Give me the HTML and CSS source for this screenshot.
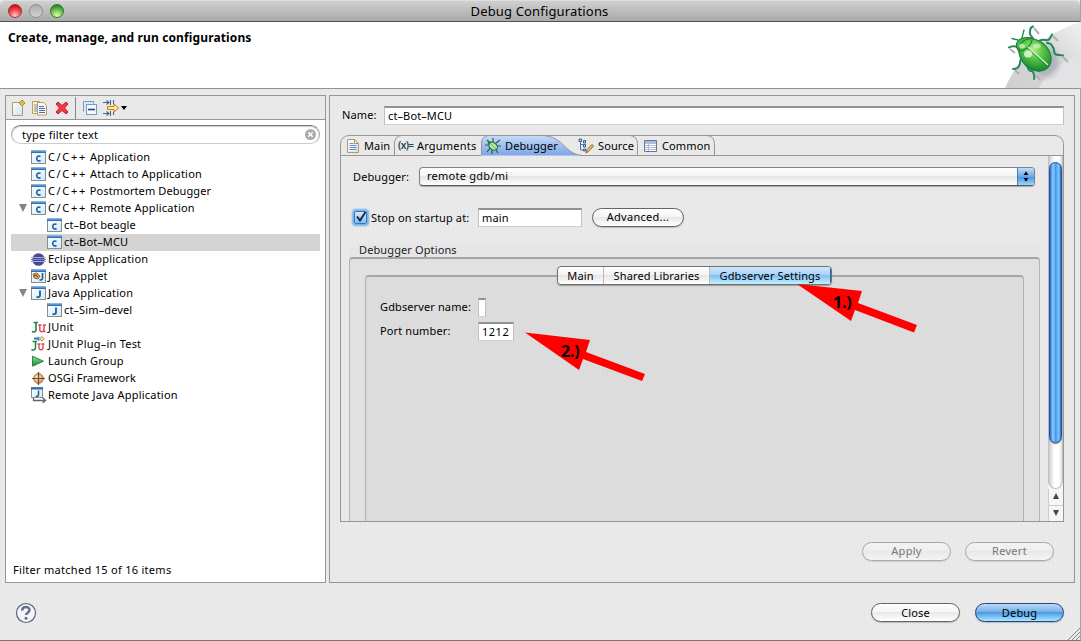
FILE: index.html
```html
<!DOCTYPE html>
<html lang="en">
<head>
<meta charset="utf-8">
<title>Debug Configurations</title>
<link rel="stylesheet" href="styles.css">
</head>
<body>
<svg class="defs" width="0" height="0">
  <defs>
    <linearGradient id="winbar" x1="0" y1="0" x2="0" y2="1"><stop offset="0" stop-color="#9ec4ec"/><stop offset="1" stop-color="#1f5fae"/></linearGradient>
    <linearGradient id="winbody" x1="0" y1="0" x2="1" y2="1"><stop offset="0" stop-color="#fff"/><stop offset="1" stop-color="#cdebfb"/></linearGradient>
    <linearGradient id="page" x1="0" y1="0" x2="1" y2="1"><stop offset="0" stop-color="#fff"/><stop offset="1" stop-color="#cfe0f3"/></linearGradient>
    <linearGradient id="play" x1="0" y1="0" x2="0" y2="1"><stop offset="0" stop-color="#8fdc9b"/><stop offset="1" stop-color="#168a3c"/></linearGradient>
    <linearGradient id="tabblue" x1="0" y1="0" x2="0" y2="1"><stop offset="0" stop-color="#c6dcf8"/><stop offset="1" stop-color="#7ba4e8"/></linearGradient>
    <radialGradient id="shell" cx=".35" cy=".4" r=".75"><stop offset="0" stop-color="#b4ee8c"/><stop offset=".4" stop-color="#5cc447"/><stop offset="1" stop-color="#087a2c"/></radialGradient>
    <radialGradient id="osgi" cx=".4" cy=".4" r=".6"><stop offset="0" stop-color="#fff0d0"/><stop offset="1" stop-color="#d29a60"/></radialGradient>
    <symbol id="i-win" viewBox="0 0 16 16"><rect x=".5" y="1.500" width="14" height="13" fill="url(#winbody)" stroke="#8a8f83"/><rect x="0" y="1" width="15" height="3" fill="url(#winbar)"/></symbol>
    <symbol id="i-c" viewBox="0 0 16 16"><use href="#i-win"/><path d="M9.500 7.500C7.900 6.500 5.700 7.200 5.700 9.500s2.200 3 3.800 2" fill="none" stroke="#1d5ba0" stroke-width="1.600"/></symbol>
    <symbol id="i-j" viewBox="0 0 16 16"><use href="#i-win"/><path d="M9 5.500v4.700c0 2-1.700 2.200-3.500 1.700" fill="none" stroke="#1d5ba0" stroke-width="1.800"/></symbol>
    <symbol id="i-applet" viewBox="0 0 16 16"><use href="#i-win"/><path d="M2 6l4-1 3 3-2 3-4-1z" fill="#d7a354" stroke="#875a25" stroke-width=".8"/><path d="M3 8l2-1 2 2" stroke="#70431a" fill="none"/><path d="M11.500 5v5c0 2-1.300 2.200-3 1.800" fill="none" stroke="#1d5ba0" stroke-width="1.600"/></symbol>
    <symbol id="i-eclipse" viewBox="0 0 16 16"><circle cx="7.500" cy="8.500" r="6.300" fill="#494a94"/><path d="M0 6.500h15M0 10.500h15" stroke="#aaa9dd"/><path d="M0 8.500h15" stroke="#8281c0"/></symbol>
    <symbol id="i-ju" viewBox="0 0 16 16"><path d="M2.500 3.500h4.500M5 3.500v7c0 2.500-2.100 3-4 2" fill="none" stroke="#23894a" stroke-width="1.700"/><path d="M7.200 6h3.300M11.800 6H15M8.800 6v4.500c0 3 4.200 3 4.200 0V6M13 12.600h1.500" fill="none" stroke="#dc4d54" stroke-width="1.500"/></symbol>
    <symbol id="i-jup" viewBox="0 0 16 16"><path d="M1.500 5.500h4.500M4.500 5.500v6c0 2.500-2.100 3-4 2" fill="none" stroke="#23894a" stroke-width="1.600"/><path d="M6.500 8h3M10.500 8H13.500M8 8v3.500c0 3 4 3 4 0V8" fill="none" stroke="#dc4d54" stroke-width="1.400"/><path d="M3 2.500h5" stroke="#3372b5" stroke-width="2"/><path d="M6.500.8h2v4h-2z" fill="#4c8ac8"/><path d="M11 .5l2.300 2.300L11 5.100 8.700 2.800z" fill="#d7e9fa" stroke="#bf8527"/></symbol>
    <symbol id="i-play" viewBox="0 0 16 16"><path d="M1.500 3.200L12.500 8.200l-11 5z" fill="url(#play)" stroke="#218646"/></symbol>
    <symbol id="i-osgi" viewBox="0 0 16 16"><circle cx="7.500" cy="8.500" r="4.800" fill="url(#osgi)" stroke="#a06b42"/><path d="M7.500 2v13M1 8.500h13" stroke="#794523" stroke-width="1.200"/></symbol>
    <symbol id="i-remote" viewBox="0 0 16 16"><rect x=".5" y=".5" width="11" height="10" fill="url(#winbody)" stroke="#8a8f83"/><path d="M0 .5h12v2H0z" fill="#276ab7"/><path d="M7.500 3.500v4.200c0 1.600-1.400 1.900-2.700 1.400" fill="none" stroke="#1d5ba0" stroke-width="1.500"/><path d="M2.500 11v2.500H14M11.500 10.500l3 3-3 2.500" fill="none" stroke="#65626b" stroke-width="1.300"/></symbol>
    <symbol id="i-bug" viewBox="0 0 16 16"><path d="M5 5L2 2M8 4V0M4 7H0M5 10l-3 4M7 12v4M11 12l2 3M12 8h4M11 5l4-3" stroke="#265e48" stroke-width="1.200"/><circle cx="4.800" cy="5.200" r="2" fill="#377a4c"/><ellipse cx="8.200" cy="8.300" rx="4.600" ry="3.500" transform="rotate(38 8.200 8.300)" fill="#b7eca0" stroke="#24724d" stroke-width="1.200"/><path d="M6 6l5 5" stroke="#5dab64"/></symbol>
  </defs>
</svg>

<div class="window">
  <header class="titlebar">
    <div class="lights"><i class="light red"></i><i class="light gray"></i><i class="light green"></i></div>
    <span class="title">Debug Configurations</span>
  </header>

  <section class="banner">
    <h1>Create, manage, and run configurations</h1>
    <svg class="bigbug" width="76" height="66" viewBox="0 0 76 66">
      <defs>
        <linearGradient id="sweep" x1="0" y1="1" x2="1" y2="0"><stop offset="0" stop-color="#d0d0d1"/><stop offset=".5" stop-color="#d4d4d6"/><stop offset="1" stop-color="#f0f0f0"/></linearGradient>
        <radialGradient id="shade"><stop offset="0" stop-color="#9fa0ac" stop-opacity=".9"/><stop offset=".6" stop-color="#a8a9b4" stop-opacity=".7"/><stop offset="1" stop-color="#b8b8c0" stop-opacity="0"/></radialGradient>
      </defs>
      <path d="M0 66C12 38 36 12 76 0v66z" fill="url(#sweep)"/>
      <path d="M34 66C43 48 59 38 76 33v33z" fill="#e3e3e5"/>
      <ellipse cx="40" cy="40" rx="18" ry="20" fill="url(#shade)"/>
      <g fill="none" stroke="#b0b0b6" stroke-width="2"><path d="M29 6l5 6M48 14l5 5M58 35l5 5M5 27l5 4M10 48l4 4M31 53l4 5"/></g>
      <g fill="none" stroke="#238857" stroke-width="2" stroke-linecap="round" stroke-linejoin="round">
        <path d="M29 18c-1-3-5-4-4-8 0-3 1-5 3-5.500M35 18.500c4-2 7 1 9-1s2-3 3-5M42 21c5 0 5 3 6 4.500 2 2 0 6 3 7s4 0 7 1M15 30c-2-1-2-5-4-5.500s-4-1-7 1M17 36c-3 2-1 5-3 8-1 2-3 3-6 3M20 41c3 1 2 5 4 7s3 0 4 2 2 4 1 7"/>
        <path d="M13 18l-6-1.500M17 16l2-8" stroke-width="1.300"/>
      </g>
      <path d="M12 26c-3-8 6-12 15-10l3 5-14 11z" fill="#45b544" stroke="#137434"/>
      <ellipse cx="30" cy="33" rx="18" ry="14" transform="rotate(45 30 33)" fill="url(#shell)" stroke="#148038"/>
      <path d="M14 29c6 0 12-5 13-11" fill="none" stroke="#178139" stroke-width="1.200"/>
      <path d="M23 25l20 18" fill="none" stroke="#c6f3af" stroke-width="1.500"/>
      <path d="M22 26l20 18" fill="none" stroke="#16772e" stroke-width=".7"/>
      <ellipse cx="23" cy="32" rx="4" ry="3.500" fill="#effce6" opacity=".75"/><ellipse cx="17" cy="24" rx="3" ry="2.500" fill="#d8f8c4" opacity=".7"/><ellipse cx="32" cy="24" rx="4" ry="2.500" fill="#e0f9d4" opacity=".6"/>
    </svg>
  </section>

  <main class="panes">
    <section class="left">
      <div class="toolbar">
        <svg width="16" height="16" viewBox="0 0 16 16"><path d="M2.500 2.500h7l3 4v9h-10z" fill="url(#page)" stroke="#ad9c6c"/><path d="M12 0l3 3-3 3-3-3z" fill="#fff3b0" stroke="#ba8614"/><path d="M12 1v4M10 3h4" stroke="#c8971d"/></svg>
        <svg class="g1" width="16" height="16" viewBox="0 0 16 16"><path d="M.5 1.500h7l2 2v10h-9z" fill="#f8f2dc" stroke="#c29b52"/><path d="M2 5h3M2 7h3M2 9h3M2 11h3" stroke="#7293be"/><path d="M5.500 2.500h6l3 3v9.500h-9z" fill="#f4f8fe" stroke="#c29b52"/><path d="M7 6.500h5M7 8.500h6M7 10.500h6M7 12.500h6" stroke="#4a72a8"/></svg>
        <svg class="g2" width="14" height="14" viewBox="0 0 14 14"><path d="M3 1l4 3.500L11 1l2 2-3.500 4 3.500 4-2 2-4-3.500L3 13l-2-2 3.500-4L1 3z" fill="#ed3c45" stroke="#c61924"/></svg>
        <i class="sep"></i>
        <svg class="g3" width="14" height="14" viewBox="0 0 14 14"><path d="M.5 10.500V.5h10v2" fill="#dbe7f6" stroke="#7b9abc"/><rect x="3.500" y="3.500" width="10" height="10" fill="#f3f8fe" stroke="#7b9abc"/><path d="M5 8.500h7" stroke="#144b91" stroke-width="1.600"/></svg>
        <svg class="g4" width="17" height="16" viewBox="0 0 17 16"><path d="M0 2.500h6M3.500.5l2.500 2-2.500 2M7.500 0v5M10.500 0v4M0 13.500h6M3.500 11.500l2.500 2-2.500 2M7.500 11v5M10.500 12v3" fill="none" stroke="#496785" stroke-width="1.100"/><path d="M4.500 6.500H11v-2.500l4.500 4-4.500 4V9.500H4.500z" fill="#ffe9a8" stroke="#be8015"/></svg>
        <i class="drop"></i>
      </div>
      <div class="searchrow">
        <div class="search"><span>type filter text</span><svg width="11" height="11" viewBox="0 0 11 11"><circle cx="5.500" cy="5.500" r="5.500" fill="#ababab"/><path d="M3.300 3.300l4.400 4.400M7.700 3.300L3.300 7.700" stroke="#fff" stroke-width="1.500"/></svg></div>
      </div>
      <ul class="tree">
        <li><svg><use href="#i-c"/></svg><span><span class="wide">C/C++</span> Application</span></li>
        <li><svg><use href="#i-c"/></svg><span><span class="wide">C/C++</span> Attach to Application</span></li>
        <li class="tight"><svg><use href="#i-c"/></svg><span><span class="wide">C/C++</span> Postmortem Debugger</span></li>
        <li class="open"><svg><use href="#i-c"/></svg><span><span class="wide">C/C++</span> Remote Application</span></li>
        <li class="child"><svg><use href="#i-c"/></svg><span>ct–Bot beagle</span></li>
        <li class="child selected"><svg><use href="#i-c"/></svg><span>ct–Bot–MCU</span></li>
        <li><svg><use href="#i-eclipse"/></svg><span>Eclipse Application</span></li>
        <li><svg><use href="#i-applet"/></svg><span>Java Applet</span></li>
        <li class="open"><svg><use href="#i-j"/></svg><span>Java Application</span></li>
        <li class="child"><svg><use href="#i-j"/></svg><span>ct–Sim–devel</span></li>
        <li><svg><use href="#i-ju"/></svg><span>JUnit</span></li>
        <li><svg><use href="#i-jup"/></svg><span>JUnit Plug–in Test</span></li>
        <li><svg><use href="#i-play"/></svg><span>Launch Group</span></li>
        <li class="tight"><svg><use href="#i-osgi"/></svg><span>OSGi Framework</span></li>
        <li><svg><use href="#i-remote"/></svg><span>Remote Java Application</span></li>
      </ul>
      <p class="status">Filter matched 15 of 16 items</p>
    </section>

    <section class="right">
      <div class="namerow"><label>Name:</label><div class="field name">ct–Bot–MCU</div></div>
      <div class="folder">
        <nav class="tabs">
          <svg class="tabshape" width="724" height="21" viewBox="0 0 724 21">
            <path d="M141 20.500V8q1-7 8-7.500h52c12 0 18 5 24 11s10 8 17 9z" fill="url(#tabblue)"/>
            <path d="M.5 21V9Q1 1 9 .5H715q7.500.5 8.500 8v12.500M54.500 20V8q.5-7 7-7.500M141.500 20V8q.5-7 7-7.500M201 .5c12 0 18 5 24 11s10 8 17 9M290 .5q7 .5 7.500 8V20M367 .5q7 .5 7.500 8V20M0 20.500H141M240 20.500H724" fill="none" stroke="#969696"/>
          </svg>
          <span class="tab t1"><svg width="12" height="14" viewBox="0 0 12 14"><path d="M.5.5h7l4 4v9H.5z" fill="url(#page)" stroke="#b79558"/><path d="M7.500.5v4h4" fill="none" stroke="#b79558"/><path d="M2.500 4.500h4M2.500 6.500h7M2.500 8.500h7M2.500 10.500h7" stroke="#6d93c5"/></svg>Main</span>
          <span class="tab t2"><b class="vars">(x)=</b>Arguments</span>
          <span class="tab t3"><svg width="16" height="16"><use href="#i-bug"/></svg>Debugger</span>
          <span class="tab t4"><svg width="16" height="16" viewBox="0 0 16 16"><path d="M2.500 3v9h4M2.500 6.500h3" fill="none" stroke="#4d79a8"/><path d="M1 1h2.500v2.500H1zM5.500 2.500h2V5h-2zM5.500 6.500h2V9h-2zM5.500 11h2v2h-2z" fill="#bfd7ee" stroke="#37618e"/><path d="M8 15l1-3.500 5-5 1.500 1.500-5 5.500z" fill="#efc178" stroke="#8d6130"/></svg>Source</span>
          <span class="tab t5"><svg width="13" height="12" viewBox="0 0 13 12"><path d="M.5.5h12v11H.5z" fill="#fff" stroke="#60789c"/><path d="M1 1h11v2H1z" fill="#a8bddb"/><path d="M1 3.500h11M1 5.500h11M1 7.500h11M1 9.500h11M4.500 1v10" stroke="#b0bfd5"/></svg>Common</span>
        </nav>
        <div class="page">
          <div class="form">
            <div class="drow"><label>Debugger:</label><div class="select"><span>remote gdb/mi</span><svg width="17" height="18" viewBox="0 0 17 18"><path d="M6 7l2.500-4L11 7zM6 10l2.500 4 2.500-4z" fill="#000"/></svg></div></div>
            <div class="startup"><i class="check"><svg width="15" height="16" viewBox="0 0 15 16"><path d="M4 6.500l3 4L12.500 2" fill="none" stroke="#152b4b" stroke-width="2"/></svg></i><label>Stop on startup at:</label><div class="field main">main</div><button class="btn adv">Advanced...</button></div>
            <div class="group">
              <div class="legend">Debugger Options</div>
              <div class="groupbox">
                <div class="inner">
                  <div class="segments"><span>Main</span><span>Shared Libraries</span><span class="on">Gdbserver Settings</span></div>
                  <div class="frow gdb"><label>Gdbserver name:</label><div class="field tiny"></div></div>
                  <div class="frow port"><label>Port number:</label><div class="field num">1212</div></div>
                </div>
              </div>
            </div>
          </div>
          <div class="scroll"><div class="track"><i class="thumb"></i></div><i class="sbtn up"></i><i class="sbtn down"></i></div>
        </div>
      </div>
      <div class="actions"><button class="btn off">Apply</button><button class="btn off">Revert</button></div>
    </section>
  </main>

  <footer class="foot">
    <svg width="22" height="22" viewBox="0 0 22 22"><circle cx="11" cy="11" r="9.500" fill="#f4f5f8" stroke="#59647f" stroke-width="1.200"/><path d="M7.300 8.600C7.200 3.900 14.600 4 14.500 8c0 2.600-3.500 2.700-3.500 5" fill="none" stroke="#64708f" stroke-width="2.500"/><circle cx="11" cy="16.200" r="1.500" fill="#64708f"/></svg>
    <div class="footbtns"><button class="btn">Close</button><button class="btn default">Debug</button></div>
  </footer>

  <svg class="grip" width="12" height="12" viewBox="0 0 12 12"><path d="M0 12L12 0M4 12l8-8M8 12l4-4" stroke="#858585"/></svg>
  <svg class="notes" width="1081" height="641" viewBox="0 0 1081 641">
    <g fill="#f00"><path d="M797 284l65 7-4 12 59 22-3 7.500-59-22.500-4 11z"/><path d="M525 332.500l65 7.500-4 12 59 22-3 7-59-22-4 11z"/></g>
    <g class="notetext"><text x="833" y="308">1.)</text><text x="561" y="357">2.)</text></g>
  </svg>
</div>
</body>
</html>
```

FILE: styles.css
```css
* { box-sizing: border-box; }
body { margin: 0; overflow: hidden; color: #000; font: 11px/15px "Noto Sans", "Open Sans", sans-serif; letter-spacing: .12px; }
.defs { position: absolute; }
svg { display: block; flex: none; }
ul, h1, p { margin: 0; padding: 0; list-style: none; }
.window { position: relative; width: 1081px; height: 641px; display: flex; flex-direction: column; background: repeating-linear-gradient(90deg, #e8e8e8 0 2px, #eaeaeb 2px 4px); border-right: 1px solid #a2a2a2; border-bottom: 1px solid #777; }
.titlebar { height: 22px; flex: none; display: flex; align-items: center; background: linear-gradient(#d0d0d0, #a9a9a9); border-top: 1px solid #dedede; border-bottom: 1px solid #515151; border-radius: 5px 5px 0 0; }
.lights { display: flex; gap: 7px; padding-left: 8px; width: 64px; }
.light { width: 14px; height: 14px; border-radius: 50%; border: 1px solid #777; }
.red { background: radial-gradient(circle at 50% 90%, #ffc3bd 5%, #f0545a 45%, #c60c18 85%); border-color: #a3322f; }
.gray { background: linear-gradient(#aaa, #d4d4d4); border-color: #8e8e8e; }
.green { background: radial-gradient(circle at 50% 90%, #d0ff9c 5%, #7cc75b 45%, #29852b 85%); border-color: #35762f; }
.title { flex: 1; text-align: center; font-size: 13px; padding-right: 65px; letter-spacing: .16px; }
.banner { height: 67px; flex: none; display: flex; justify-content: space-between; background: #fff; border-bottom: 1px solid #929292; }
h1 { font-size: 12px; line-height: 16px; padding: 8px 0 0 8px; font-weight: 700; letter-spacing: .13px; }
.bigbug { margin-right: -1px; overflow: hidden; }
.panes { flex: none; height: 488px; margin-top: 6px; padding: 0 5px 0 5px; display: flex; gap: 3px; }
.left { width: 321px; border: 1px solid #969696; background: #fff; display: flex; flex-direction: column; }
.toolbar { height: 24px; flex: none; display: flex; align-items: center; padding-left: 4px; background: repeating-linear-gradient(90deg, #e8e8e8 0 2px, #eaeaeb 2px 4px); border-bottom: 1px solid #969696; }
.g1 { margin-left: 6px; }
.g2 { margin-left: 7px; }
.g3 { margin-left: 7px; }
.g4 { margin-left: 6px; }
.sep { width: 1px; height: 22px; margin-left: 6px; background: #858585; }
.drop { border: 3px solid transparent; border-top: 4px solid #000; border-bottom: 0; margin-left: 1px; }
.searchrow { padding: 5px 5px 0; height: 29px; flex: none; }
.search { height: 19px; border: 1px solid #aaa; border-top-color: #777; border-bottom-color: #ccc; border-radius: 10px; box-shadow: inset 0 1px 1px #ccc; display: flex; align-items: center; justify-content: space-between; padding: 0 3px 0 10px; }
.search span { letter-spacing: .25px; }
.tree { flex: 1; padding: 0 5px; letter-spacing: .22px; }
.tree li { height: 17px; display: flex; align-items: center; padding: 0 0 2px 20px; white-space: nowrap; }
.tree svg { width: 16px; height: 16px; margin-right: 1px; }
.tree .child { padding-left: 36px; letter-spacing: .12px; }
.tree .tight { letter-spacing: .1px; }
.tree .selected { background: #d4d4d4; }
.tree .open { padding-left: 8px; }
.tree .open::before { content: ""; margin: 0 4px 0 0; border: 4.500px solid transparent; border-top: 8px solid #858585; border-bottom: 0; }
.wide { letter-spacing: 1.65px; }
.status { padding: 0 0 5px 7px; letter-spacing: .29px; }
.right { width: 746px; border: 1px solid #969696; padding: 10px 10px 0 10px; display: flex; flex-direction: column; }
.namerow { display: flex; height: 19px; padding-left: 2px; flex: none; }
.namerow label { width: 42px; padding-top: 1px; }
.field { height: 19px; background: #fff; border: 1px solid #b5b5b5; border-top: 2px solid #858585; border-color: #909090 #c0c0c0 #d0d0d0 #c0c0c0; padding: 0 3px; line-height: 15px; }
.name { flex: 1; }
.folder { height: 387px; width: 724px; margin-top: 10px; flex: none; display: flex; flex-direction: column; }
.tabs { position: relative; height: 21px; flex: none; display: flex; align-items: center; }
.tabshape { position: absolute; left: 0; top: 0; }
.tab { position: relative; display: flex; align-items: center; height: 21px; padding-bottom: 1px; }
.tab svg { margin-top: 1px; }
.t1 { width: 58px; padding-left: 7px; gap: 5px; }
.t2 { width: 87px; gap: 3px; letter-spacing: .2px; }
.t3 { width: 93px; gap: 4px; letter-spacing: .1px; }
.t4 { width: 66px; gap: 4px; }
.t5 { gap: 5px; }
.vars { font-size: 10px; letter-spacing: -.6px; font-weight: 600; color: #24445b; width: 16px; white-space: nowrap; }
.page { flex: 1; min-height: 0; display: flex; border: 1px solid #969696; border-top: 0; }
.form { width: 707px; flex: none; display: flex; flex-direction: column; overflow: hidden; }
.drow { height: 41px; flex: none; padding: 11px 0 0 12px; display: flex; }
.drow label { width: 66px; padding-top: 2px; }
.select { width: 616px; height: 19px; display: flex; justify-content: space-between; border: 1px solid #808080; border-bottom-color: #555; border-radius: 4px; background: linear-gradient(#fff, #f4f4f4 45%, #e4e4e4 50%, #fff); overflow: hidden; box-shadow: 0 1px 1px #aaa; padding-left: 7px; line-height: 16px; letter-spacing: .25px; }
.select svg { background: linear-gradient(#c2dcf6, #6aa7e8 48%, #4595e0 50%, #a8e1ff); border-left: 1px solid #447ab9; }
.startup { height: 46px; flex: none; display: flex; align-items: flex-start; padding: 10px 0 0 12px; }
.startup .field { margin-top: 1px; height: 19px; }
.check { width: 13px; height: 13px; margin: 4px 0 0 1px; border: 1px solid #3577b9; border-radius: 2px; background: linear-gradient(#d6eafa, #83bcf0); box-shadow: 0 0 2px 2px #76b0e6; }
.check svg { margin: -2px 0 0 -2px; }
.startup label { margin: 3px 0 0 4px; width: 107px; }
.main { width: 104px; }
.btn { width: 89px; height: 19px; padding: 0; font: inherit; letter-spacing: .15px; line-height: 16px; border: 1px solid #646464; border-radius: 10px; background: linear-gradient(#fff, #f4f4f4 48%, #e8e8e8 50%, #fff); color: #000; box-shadow: 0 1px 1px #bbb; }
.adv { width: 92px; margin: 1px 0 0 10px; padding-bottom: 1px; letter-spacing: .3px; }
.group { margin-left: 8px; width: 691px; flex: 1; display: flex; flex-direction: column; background: #e6e6e7; }
.legend { height: 14px; line-height: 13px; padding-left: 10px; color: #222; letter-spacing: .12px; }
.groupbox { flex: 1; border: 1px solid #b4b4b4; border-top: 2px solid #a5a5a5; border-bottom: 0; border-radius: 4px 4px 0 0; background: repeating-linear-gradient(90deg, #e0e0e0 0 2px, #e2e2e2 2px 4px); padding: 16px 15px 0; display: flex; }
.inner { flex: 1; border: 1px solid #b0b0b0; border-top: 2px solid #a5a5a5; border-bottom: 0; border-radius: 4px 4px 0 0; background: repeating-linear-gradient(90deg, #dbdbdb 0 2px, #ddd 2px 4px); }
.segments { display: flex; width: 275px; height: 19px; margin: -11px 0 0 191px; border: 1px solid #707070; border-radius: 4px; overflow: hidden; background: linear-gradient(#fff, #f2f2f2 48%, #e6e6e6 50%, #fff); box-shadow: 0 1px 1px #999; }
.segments span { text-align: center; line-height: 17px; width: 46px; border-right: 1px solid #bbb; }
.segments span:nth-child(2) { width: 106px; }
.segments .on { flex: 1; border-right: 1px solid #2b65ad; background: linear-gradient(#cce6fb, #a7d2f8 48%, #82c1f5 50%, #c2efff); }
.frow { display: flex; padding-left: 14px; height: 24px; }
.frow label { width: 98px; padding-top: 2px; }
.frow .field { margin-top: 1px; }
.gdb { margin-top: 12px; }
.tiny { width: 8px; padding: 0; }
.num { width: 36px; padding: 0 0 0 3px; letter-spacing: .5px; }
.scroll { width: 15px; display: flex; flex-direction: column; background: #f6f6f6; }
.track { height: 333px; border: 1px solid #c0c0c0; border-width: 0 1px 1px; border-radius: 0 0 8px 8px; background: linear-gradient(90deg, #ccc, #fff 40%, #fff 75%, #ddd); padding-top: 6px; }
.thumb { display: block; width: 13px; height: 281px; border-radius: 7px; border: 1px solid #1c50a8; background: linear-gradient(90deg, #1f69cf, #8cc7f7 25%, #69b2f2 42%, #4398ec 50%, #7bcaff 82%, #265eb0); box-shadow: 0 1px 1px #777; }
.sbtn { flex: 1; display: flex; align-items: center; justify-content: center; border-top: 1px solid #c8c8c8; border-left: 1px solid #ccc; }
.up { border-top: 0; }
.sbtn::before { content: ""; border: 3.500px solid transparent; }
.up::before { border-bottom: 6px solid #444; border-top: 0; margin-top: -2px; }
.down::before { border-top: 6px solid #444; border-bottom: 0; }
.actions { display: flex; justify-content: flex-end; gap: 14px; padding: 20px 10px 0 0; }
.off { color: #777; border-color: #aaa; background: linear-gradient(#f2f2f2, #eee 48%, #e8e8e8 50%, #f5f5f5); box-shadow: 0 1px 1px #d0d0d0; letter-spacing: .3px; padding-bottom: 1px; }
.foot { flex: 1; display: flex; justify-content: space-between; align-items: flex-start; padding: 19px 16px 0 15px; }
.footbtns { display: flex; gap: 15px; padding-top: 1px; }
.default { border-color: #28418b; background: linear-gradient(#bcdaf4, #75afe9 46%, #4c99e4 50%, #a9e9ff); }
.grip { position: absolute; right: 0; bottom: 0; }
.notes { position: absolute; left: 0; top: 0; pointer-events: none; }
.notetext { font: 700 16px "Open Sans", "Noto Sans", sans-serif; letter-spacing: -.2px; }
```
